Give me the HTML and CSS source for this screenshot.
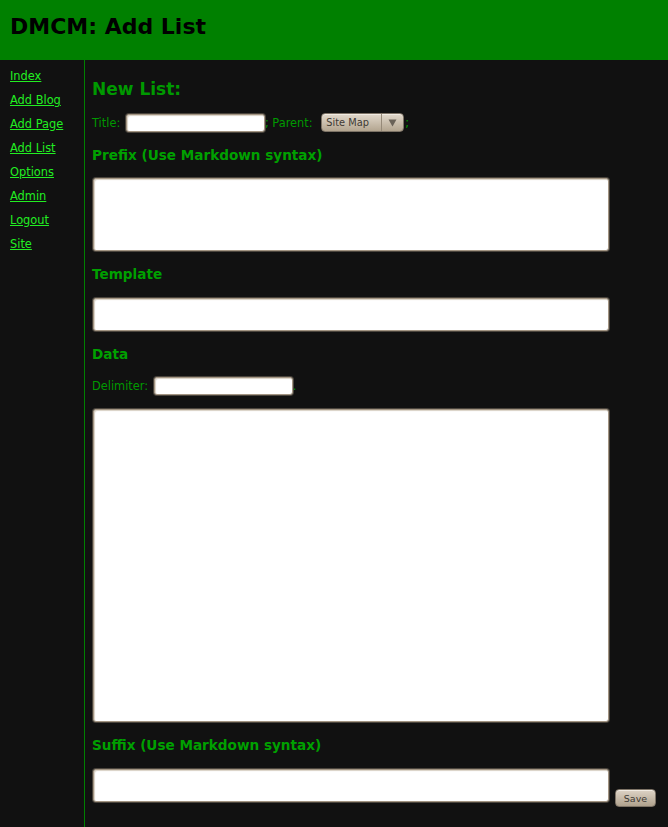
FILE: index.html
```html
<!DOCTYPE html>
<html>
<head>
<meta charset="utf-8">
<title>DMCM: Add List</title>
<link rel="stylesheet" href="styles.css">
</head>
<body>
<header class="topbar"><h1 class="title">DMCM: Add List</h1></header>
<div class="layout">
  <nav class="sidebar">
    <a href="#">Index</a>
    <a href="#">Add Blog</a>
    <a href="#">Add Page</a>
    <a href="#">Add List</a>
    <a href="#">Options</a>
    <a href="#">Admin</a>
    <a href="#">Logout</a>
    <a href="#">Site</a>
  </nav>
  <main class="content">
    <h2 class="page-heading">New List:</h2>
    <div class="row row-title">Title: <input class="field field-short" type="text">; Parent: <span class="select"><span class="select-text">Site Map</span><span class="select-btn"><svg width="9" height="8" viewBox="0 0 9 8"><path d="M0.5 0.5 L8.5 0.5 L4.5 7.5 Z" fill="#6a6258"/></svg></span></span>;</div>
    <h3 class="section section-prefix">Prefix (Use Markdown syntax)</h3>
    <textarea class="field box box-prefix"></textarea>
    <h3 class="section">Template</h3>
    <textarea class="field box box-small box-template"></textarea>
    <h3 class="section">Data</h3>
    <div class="row row-delim">Delimiter: <input class="field field-short" type="text">.</div>
    <textarea class="field box box-data"></textarea>
    <h3 class="section">Suffix (Use Markdown syntax)</h3>
    <div class="save-row">
      <textarea class="field box box-small box-suffix"></textarea>
      <button class="save" type="button">Save</button>
    </div>
  </main>
</div>
</body>
</html>
```
FILE: styles.css
```css
html, body {
  margin: 0;
  padding: 0;
  height: 100%;
}
body {
  background: #111111;
  font-family: "DejaVu Sans", Verdana, sans-serif;
  color: #00a000;
  display: flex;
  flex-direction: column;
  overflow: hidden;
}
.topbar {
  background: #008000;
  height: 60px;
  flex: none;
  box-sizing: border-box;
  padding: 13px 0 0 10px;
}
.title {
  margin: 0;
  font-size: 22px;
  line-height: 28px;
  font-weight: bold;
  color: #000;
}
.layout {
  display: flex;
  flex: 1;
}
.sidebar {
  flex: none;
  border-right: 1px solid #008000;
  box-sizing: border-box;
  width: 85px;
  padding: 8px 0 0 10px;
  display: flex;
  flex-direction: column;
  align-items: flex-start;
}
.sidebar a {
  color: #22ee22;
  font-size: 11.4px;
  line-height: 16px;
  margin-bottom: 8px;
}
.content {
  padding-left: 7px;
  flex: 1;
}
.page-heading {
  margin: 18px 0 0 0;
  font-size: 17px;
  line-height: 22px;
  font-weight: bold;
  color: #009900;
}
.row {
  font-size: 11.4px;
  line-height: 20px;
  height: 20px;
  color: #009900;
  white-space: nowrap;
}
.row .field, .row .select {
  vertical-align: middle;
  margin-left: 2px;
}
.row .select {
  margin-left: 5px;
  margin-right: 1px;
}
.row-title { margin-top: 13px; }
.row-delim { margin-top: 14px; }
.section {
  margin: 15px 0 0 0;
  font-size: 13.6px;
  line-height: 16px;
  font-weight: bold;
  color: #00a000;
}
.section-prefix { margin-top: 14px; }
.field {
  background: #fff;
  border: 1px solid #a39583;
  border-radius: 3px;
  box-shadow: inset 1px 1px 1px #d9d1c5, 0 0 0 1px #4a443c;
  box-sizing: border-box;
  margin: 0;
  padding: 2px;
  font-family: inherit;
  outline: none;
}
.field-short {
  width: 139px;
  height: 18px;
  position: relative;
  top: -1px;
}
.box {
  display: block;
  width: 516px;
  margin-left: 1px;
  resize: none;
}
.box-prefix { margin-top: 15px; height: 73px; }
.box-small { height: 33px; }
.box-template { margin-top: 16px; }
.box-data { margin-top: 13px; height: 313px; }
.save-row {
  display: flex;
  align-items: flex-end;
  margin-top: 16px;
}
.save-row .box { margin-top: 0; }
.select {
  display: inline-flex;
  width: 83px;
  height: 19px;
  box-sizing: border-box;
  border: 1px solid #7d7366;
  border-radius: 4px;
  background: linear-gradient(#e2d9cc, #b3a590);
  box-shadow: inset 0 1px 0 #f1ebe2;
  color: #3e3a34;
  font-size: 9.8px;
  line-height: 17px;
  align-items: stretch;
  position: relative;
  top: -1px;
}
.select-text {
  flex: 1;
  padding-left: 4px;
  display: flex;
  align-items: center;
}
.select-btn {
  width: 21px;
  border-left: 1px solid #968a79;
  display: flex;
  align-items: center;
  justify-content: center;
}
.save {
  width: 41px;
  height: 18px;
  margin: 0 0 -5px 6px;
  padding: 0;
  border: 1px solid #7d7366;
  border-radius: 4px;
  background: linear-gradient(#ddd3c5, #b0a28d);
  box-shadow: inset 0 1px 0 #f1ebe2;
  color: #3e3a34;
  font-family: inherit;
  font-size: 9.5px;
}
```
